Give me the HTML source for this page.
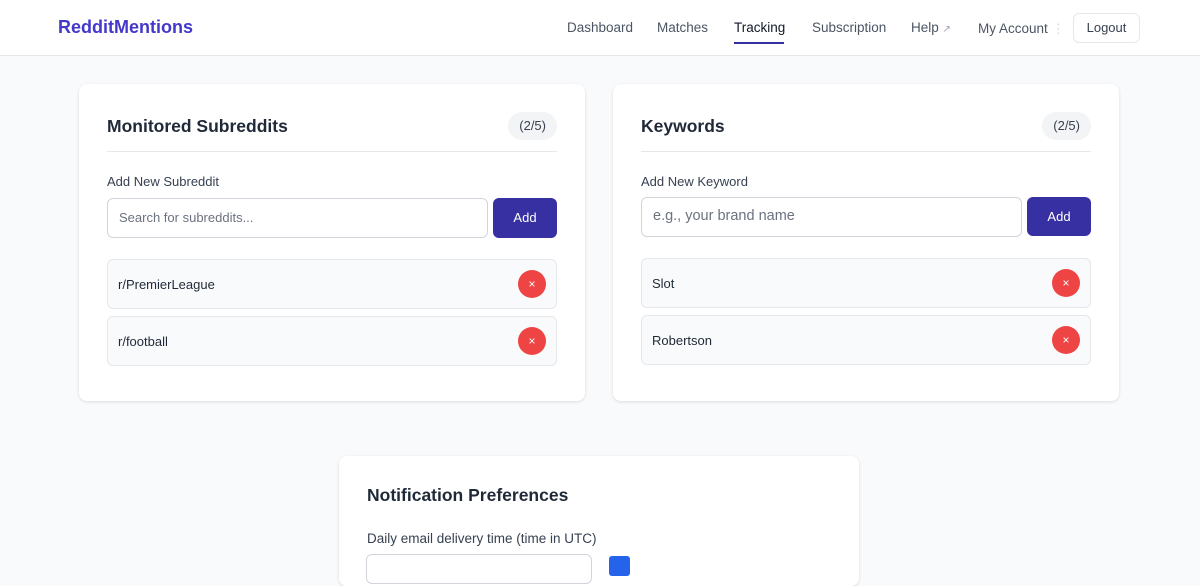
<!DOCTYPE html>
<html><head><style>
*{box-sizing:border-box;margin:0;padding:0}
body{width:1200px;height:564px;overflow:hidden;background:#f9fafb;font-family:"Liberation Sans",sans-serif;color:#1f2937;position:relative}
.nav{position:absolute;left:0;top:0;width:1200px;height:56px;background:#fff;border-bottom:1px solid #e5e7eb}
.logo{position:absolute;left:58px;top:17px;font-size:18px;font-weight:bold;color:#4338ca}
.nl{position:absolute;top:20px;font-size:13.5px;color:#4b5563}
.card{position:absolute;background:#fff;border-radius:8px;box-shadow:0 1px 3px rgba(0,0,0,.12)}
.h{position:absolute;left:28px;top:32px;font-size:17.5px;font-weight:bold;color:#1f2937}
.badge{position:absolute;right:28px;top:28px;height:28px;padding:0 11px;border-radius:14px;background:#f3f4f6;font-size:13px;line-height:28px;color:#374151}
.hr{position:absolute;left:28px;right:28px;top:67px;border-top:1px solid #e5e7eb}
.lbl{position:absolute;left:28px;top:90px;font-size:13px;color:#374151}
.inp{position:absolute;left:28px;top:114px;width:381px;height:40px;border:1px solid #d1d5db;border-radius:6px;font-size:13px;color:#6b7280;padding:11px 11px}
.btn{position:absolute;right:28px;top:114px;width:64px;height:40px;background:#3730a3;border-radius:6px;color:#fff;font-size:13px;text-align:center;line-height:40px}
.item{position:absolute;left:28px;right:28px;height:50px;background:#f9fafb;border:1px solid #e5e7eb;border-radius:6px;font-size:13px;padding:17px 10px;color:#1f2937}
.x{position:absolute;right:10px;top:10px;width:28px;height:28px;border-radius:50%;background:#ef4444;color:#fff;font-size:12px;text-align:center;line-height:28px}
</style></head><body>
<div class="nav">
<div class="logo">RedditMentions</div>
<div class="nl" style="left:567px">Dashboard</div>
<div class="nl" style="left:657px">Matches</div>
<div class="nl" style="left:734px;color:#111827">Tracking</div>
<div style="position:absolute;left:734px;top:42px;width:50px;height:2px;background:#3730a3"></div>
<div class="nl" style="left:812px">Subscription</div>
<div class="nl" style="left:911px">Help <span style="font-size:10px;color:#9ca3af">↗</span></div>
<div class="nl" style="left:978px;top:21px">My Account <span style="color:#d1d5db">⋮</span></div>
<div style="position:absolute;left:1073px;top:13px;width:67px;height:30px;border:1px solid #e5e7eb;border-radius:6px;font-size:13px;text-align:center;line-height:28px;color:#374151">Logout</div>
</div>
<div class="card" style="left:79px;top:84px;width:506px;height:317px">
<div class="h">Monitored Subreddits</div><div class="badge">(2/5)</div><div class="hr"></div>
<div class="lbl">Add New Subreddit</div>
<div class="inp">Search for subreddits...</div><div class="btn">Add</div>
<div class="item" style="top:175px">r/PremierLeague<div class="x">×</div></div>
<div class="item" style="top:232px">r/football<div class="x">×</div></div>
</div>
<div class="card" style="left:613px;top:84px;width:506px;height:317px">
<div class="h">Keywords</div><div class="badge">(2/5)</div><div class="hr"></div>
<div class="lbl">Add New Keyword</div>
<div class="inp" style="top:113px;font-size:14.5px;padding:10px 11px">e.g., your brand name</div><div class="btn" style="top:113px;height:39px;line-height:39px">Add</div>
<div class="item" style="top:174px">Slot<div class="x">×</div></div>
<div class="item" style="top:231px">Robertson<div class="x">×</div></div>
</div>
<div class="card" style="left:339px;top:456px;width:520px;height:130px">
<div class="h" style="top:29px">Notification Preferences</div>
<div class="lbl" style="top:75px;font-size:13.5px">Daily email delivery time (time in UTC)</div>
<div style="position:absolute;left:27px;top:98px;width:226px;height:30px;border:1px solid #d1d5db;border-radius:6px"></div>
<div style="position:absolute;left:270px;top:100px;width:21px;height:20px;background:#2563eb;border-radius:3px"></div>
</div>
</body></html>
